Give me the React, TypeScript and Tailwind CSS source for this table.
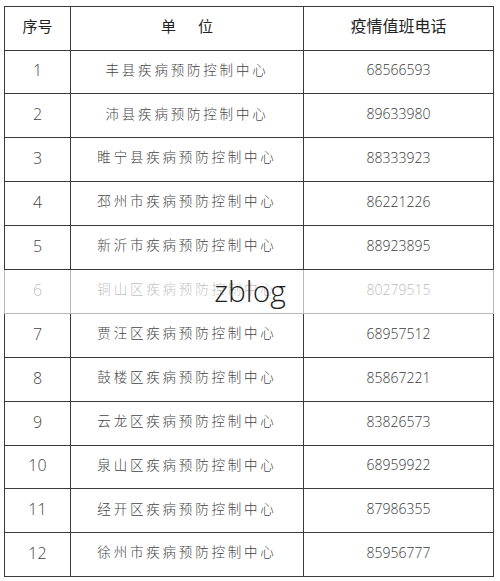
import React from 'react'

const rows = [
  ['1', '丰县疾病预防控制中心', '68566593'],
  ['2', '沛县疾病预防控制中心', '89633980'],
  ['3', '睢宁县疾病预防控制中心', '88333923'],
  ['4', '邳州市疾病预防控制中心', '86221226'],
  ['5', '新沂市疾病预防控制中心', '88923895'],
  ['6', '铜山区疾病预防控制中心', '80279515'],
  ['7', '贾汪区疾病预防控制中心', '68957512'],
  ['8', '鼓楼区疾病预防控制中心', '85867221'],
  ['9', '云龙区疾病预防控制中心', '83826573'],
  ['10', '泉山区疾病预防控制中心', '68959922'],
  ['11', '经开区疾病预防控制中心', '87986355'],
  ['12', '徐州市疾病预防控制中心', '85956777'],
]

const cjk = { fontFamily: '"Noto Sans CJK SC", sans-serif' }
const num = { fontFamily: '"Open Sans", "Noto Sans CJK SC", sans-serif' }

export default function App() {
  return (
    <div className="relative w-[500px] h-[581px] bg-white overflow-hidden">
      <div className="pt-[6px] pl-[4px]">
        <table className="w-[489px] border-collapse table-fixed">
          <colgroup>
            <col className="w-[66px]" />
            <col className="w-[233px]" />
            <col className="w-[190px]" />
          </colgroup>
          <thead>
            <tr className="h-[43.5px]">
              <th className="border border-[#3a3a3a] text-[15px] font-normal text-[#222] leading-none pb-[6px]" style={cjk}>
                序号
              </th>
              <th className="border border-[#3a3a3a] text-[15px] font-normal text-[#222] leading-none pb-[6px]" style={cjk}>
                <span className="tracking-[22px] pl-[22px]">单位</span>
              </th>
              <th className="border border-[#3a3a3a] text-[16px] font-normal text-[#222] leading-none pb-[6px]" style={cjk}>
                疫情值班电话
              </th>
            </tr>
          </thead>
          <tbody>
            {rows.map(([n, name, tel]) => (
              <tr key={n} className="h-[43.9px]">
                <td className="border border-[#3a3a3a] text-center text-[16px] font-light text-[#444] leading-none pb-[3px]" style={num}>
                  {n}
                </td>
                <td className="border border-[#3a3a3a] text-center text-[13.5px] text-[#444] tracking-[2.8px] font-light leading-none pb-[5px]" style={cjk}>
                  {name}
                </td>
                <td className="border border-[#3a3a3a] text-center text-[14px] font-light text-[#3a3a3a] leading-none pb-[3px]" style={num}>
                  {tel}
                </td>
              </tr>
            ))}
          </tbody>
        </table>
      </div>
      <div className="absolute left-0 right-0 top-[270px] h-[44px] bg-white/65 flex items-center justify-center">
        <span className="text-[30px] font-light text-[#1e1e1e] leading-none -mt-[2px]" style={{ fontFamily: '"Open Sans", sans-serif' }}>
          zblog
        </span>
      </div>
    </div>
  )
}
